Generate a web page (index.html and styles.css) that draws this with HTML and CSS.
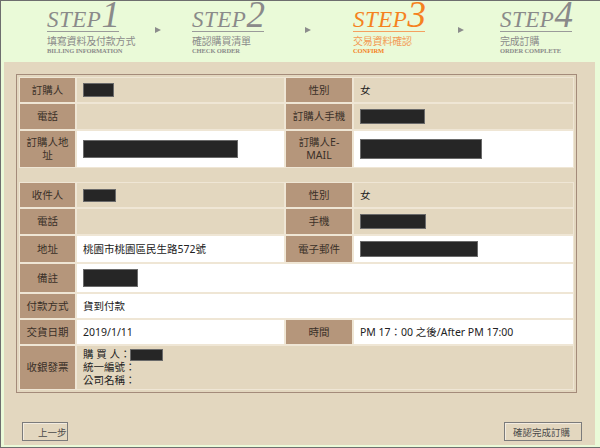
FILE: index.html
```html
<!DOCTYPE html>
<html lang="zh-Hant">
<head>
<meta charset="utf-8">
<title>確認訂購</title>
<link rel="stylesheet" href="styles.css">
</head>
<body>
<div class="frame">
  <div class="steps">
    <div class="step st1">
      <div class="title"><span class="word">STEP</span><span class="num">1</span></div>
      <div class="zh">填寫資料及付款方式</div>
      <div class="en">BILLING INFORMATION</div>
    </div>
    <div class="arrow a1"></div>
    <div class="step st2">
      <div class="title"><span class="word">STEP</span><span class="num">2</span></div>
      <div class="zh">確認購買清單</div>
      <div class="en">CHECK ORDER</div>
    </div>
    <div class="arrow a2"></div>
    <div class="step st3 active">
      <div class="title"><span class="word">STEP</span><span class="num">3</span></div>
      <div class="zh">交易資料確認</div>
      <div class="en">CONFIRM</div>
    </div>
    <div class="arrow a3"></div>
    <div class="step st4">
      <div class="title"><span class="word">STEP</span><span class="num">4</span></div>
      <div class="zh">完成訂購</div>
      <div class="en">ORDER COMPLETE</div>
    </div>
  </div>

  <div class="panel">
    <table class="info">
      <colgroup>
        <col class="c1"><col class="c2"><col class="c3"><col class="c4">
      </colgroup>
      <tr>
        <th>訂購人</th>
        <td><span class="redact r-buyer"></span></td>
        <th>性別</th>
        <td>女</td>
      </tr>
      <tr>
        <th>電話</th>
        <td></td>
        <th>訂購人手機</th>
        <td><span class="redact r-mobile"></span></td>
      </tr>
      <tr>
        <th>訂購人地<br>址</th>
        <td class="w"><span class="redact r-addr"></span></td>
        <th>訂購人E-<br>MAIL</th>
        <td class="w"><span class="redact r-mail"></span></td>
      </tr>
      <tr class="spacer"><td colspan="4"></td></tr>
      <tr>
        <th>收件人</th>
        <td><span class="redact r-recv"></span></td>
        <th>性別</th>
        <td>女</td>
      </tr>
      <tr>
        <th>電話</th>
        <td></td>
        <th>手機</th>
        <td><span class="redact r-mobile2"></span></td>
      </tr>
      <tr>
        <th>地址</th>
        <td class="w">桃園市桃園區民生路572號</td>
        <th>電子郵件</th>
        <td class="w"><span class="redact r-mail2"></span></td>
      </tr>
      <tr>
        <th>備註</th>
        <td class="w" colspan="3"><span class="redact r-note"></span></td>
      </tr>
      <tr>
        <th>付款方式</th>
        <td class="w" colspan="3">貨到付款</td>
      </tr>
      <tr>
        <th>交貨日期</th>
        <td class="w">2019/1/11</td>
        <th>時間</th>
        <td class="w">PM 17：00 之後/After PM 17:00</td>
      </tr>
      <tr>
        <th>收銀發票</th>
        <td class="invoice" colspan="3">
          <div>購 買 人：<span class="redact r-inv"></span></div>
          <div>統一編號：</div>
          <div>公司名稱：</div>
        </td>
      </tr>
    </table>

    <div class="actions">
      <button class="btn back" type="button">上一步</button>
      <button class="btn confirm" type="button">確認完成訂購</button>
    </div>
  </div>
</div>
</body>
</html>
```

FILE: styles.css
```css
body {
  margin: 0;
}

.frame {
  box-sizing: border-box;
  width: 600px;
  height: 448px;
  background: #eafad8;
  border-top: 1px solid #6e6e6e;
  border-left: 1px solid #6e6e6e;
  border-bottom: 1px solid #6e6e6e;
  display: flex;
  flex-direction: column;
  font-family: "Noto Sans", "Noto Sans CJK TC", sans-serif;
}

/* ---------- steps header ---------- */
.steps {
  box-sizing: border-box;
  height: 61px;
  flex: none;
  display: flex;
  padding: 0 0 0 46px;
}

.step {
  flex: none;
  color: #8a8a8a;
}
.st1 { width: 108px; }
.st2 { width: 113px; }
.st3 { width: 105px; }
.st4 { width: 80px; }

.title {
  box-sizing: border-box;
  width: 72px;
  height: 31px;
  display: flex;
  align-items: baseline;
  font-family: "Liberation Serif", "DejaVu Serif", serif;
  font-style: italic;
  border-bottom: 1px solid #9a9a9a;
  white-space: nowrap;
}
.title .word {
  font-size: 23px;
  line-height: 23px;
  letter-spacing: 0.5px;
}
.title .num {
  font-size: 37px;
  line-height: 27px;
}

.zh {
  margin-top: 3px;
  font-size: 10px;
  line-height: 12px;
  font-family: "Noto Sans CJK TC", sans-serif;
  letter-spacing: -0.2px;
}
.en {
  margin-top: 0;
  font-family: "Liberation Serif", serif;
  font-size: 6.5px;
  line-height: 8px;
  font-weight: bold;
  letter-spacing: -0.1px;
}

.active { color: #f5821f; }
.active .title { border-bottom-color: #f5a060; }
.active .zh { color: #f39a55; }

.arrow {
  flex: none;
  margin-top: 26px;
  height: 7px;
}
.arrow::before {
  content: "";
  display: block;
  width: 0;
  height: 0;
  border-left: 6px solid #8c8c8c;
  border-top: 3.5px solid transparent;
  border-bottom: 3.5px solid transparent;
}
.a1 { width: 37px; }
.a2 { width: 48px; }
.a3 { width: 42px; }

/* ---------- panel ---------- */
.panel {
  flex: 1;
  margin: 0 5px 2px 3px;
  background: #e3d7bf;
  display: flex;
  flex-direction: column;
}

.info {
  margin: 12px 0 0 12px;
  width: 561px;
  table-layout: fixed;
  border-collapse: separate;
  border-spacing: 0;
  border: 1px solid #a48b7a;
  padding: 2px;
  font-size: 10.5px;
  color: #222;
}
.c1 { width: 57px; }
.c2 { width: 209px; }
.c3 { width: 68px; }
.c4 { width: 221px; }

.info th,
.info td {
  border: 1px solid #efe6d5;
  padding: 5px 5px;
  height: 14px;
  line-height: 13px;
  vertical-align: middle;
}
.info th {
  background: #b5967b;
  color: #3a3028;
  font-weight: normal;
  text-align: center;
  padding: 5px 2px;
}
.info td {
  text-align: left;
  padding-left: 6px;
}
.info td.w {
  background: #ffffff;
}
.info .spacer td {
  border: none;
  padding: 0;
  height: 14px;
}
.info td.invoice {
  padding-top: 2px;
  padding-bottom: 2px;
  line-height: 13px;
}

.redact {
  display: inline-block;
  vertical-align: middle;
  background: #262626;
  border: 1px solid #6a6a6a;
  box-sizing: border-box;
}
.r-buyer   { width: 31px;  height: 14px; }
.r-mobile  { width: 65px;  height: 15px; }
.r-addr    { width: 155px; height: 18px; }
.r-mail    { width: 122px; height: 20px; }
.r-recv    { width: 33px;  height: 13px; }
.r-mobile2 { width: 66px;  height: 15px; }
.r-mail2   { width: 118px; height: 16px; }
.r-note    { width: 55px;  height: 18px; }
.r-inv     { width: 33px;  height: 12px; }

/* ---------- actions ---------- */
.actions {
  margin-top: auto;
  display: flex;
  justify-content: space-between;
  padding: 0 13px 4px 18px;
}
.btn {
  box-sizing: border-box;
  height: 19px;
  border: 1px solid #7b7b7b;
  box-shadow: inset 1px 1px 0 #f3ece0;
  background: #e3d7bf;
  font-family: "Noto Sans CJK TC", sans-serif;
  font-size: 9.5px;
  line-height: 16px;
  color: #4a4a4a;
  text-align: left;
  white-space: nowrap;
  padding: 0;
}
.back {
  width: 46px;
  padding-left: 15px;
}
.confirm {
  width: 78px;
  padding-left: 8px;
}
```
